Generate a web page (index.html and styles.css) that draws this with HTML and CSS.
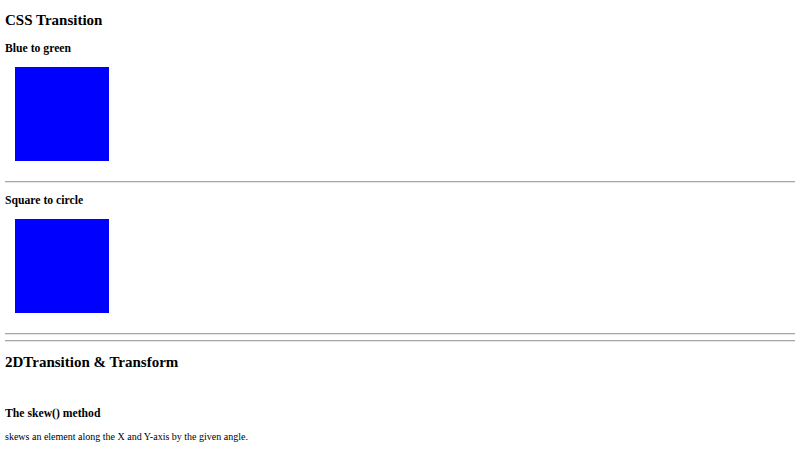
FILE: index.html
```html
<!DOCTYPE html>
<html>
<head>
<meta charset="utf-8">
<title>CSS Transition</title>
<link rel="stylesheet" href="styles.css">
</head>
<body>
<h2 class="title">CSS Transition</h2>
<h3 class="subtitle">Blue to green</h3>
<div class="box"></div>
<hr class="rule">
<h3 class="subtitle">Square to circle</h3>
<div class="box"></div>
<hr class="rule">
<hr class="rule">
<h2 class="title">2DTransition &amp; Transform</h2>
<div class="spacer"></div>
<h3 class="subtitle">The skew() method</h3>
<p class="text">skews an element along the X and Y-axis by the given angle.</p>
</body>
</html>
```
FILE: styles.css
```css
html, body {
  background: #ffffff;
}
body {
  margin: 0;
  padding: 0 5px;
  font-family: "Liberation Serif", "Times New Roman", serif;
  color: #000000;
}
.title {
  font-size: 15px;
  font-weight: bold;
  margin: 12.45px 0;
}
.subtitle {
  font-size: 11.7px;
  font-weight: bold;
  margin: 11.7px 0;
}
.box {
  width: 94px;
  height: 94px;
  background: #0000ff;
  margin: 0 0 20px 10px;
}
.rule {
  height: 0;
  margin: 5px 0;
  border: none;
  border-top: 1px solid #a8a8a8;
  border-bottom: 1px solid #e4e4e4;
}
.spacer {
  height: 11px;
}
.text {
  font-size: 10px;
  margin: 10px 0;
}
```
